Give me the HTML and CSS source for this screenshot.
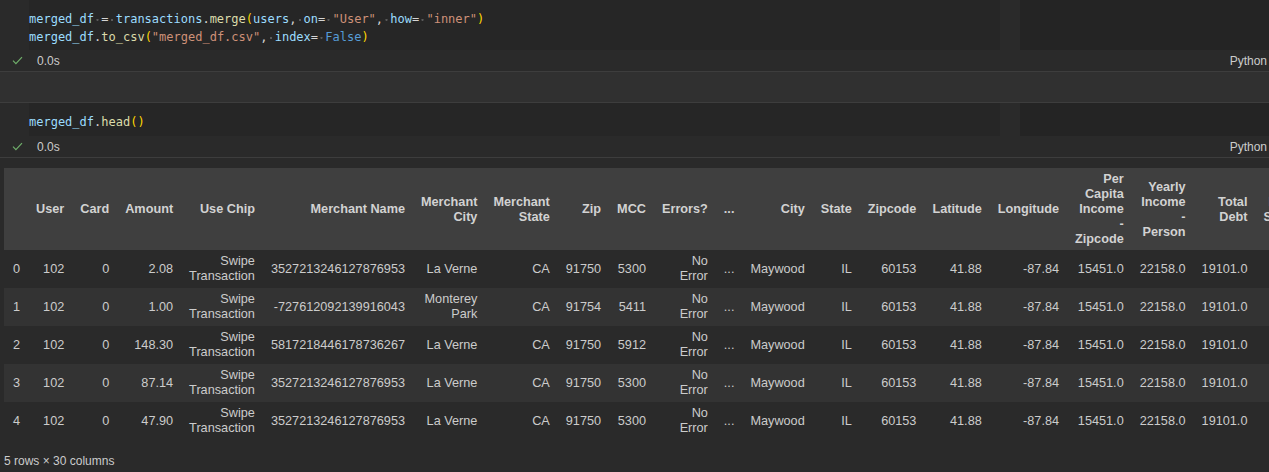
FILE: index.html
```html
<!DOCTYPE html>
<html>
<head>
<meta charset="utf-8">
<link rel="stylesheet" href="styles.css">
</head>
<body>
<div class="nb">
  <div class="cell">
    <div class="editor">
      <div class="gutter"></div>
      <div class="code">
        <div class="line"><span class="v">merged_df</span><span class="ws"> </span><span class="op">=</span><span class="ws"> </span><span class="v">transactions</span><span class="op">.</span><span class="f">merge</span><span class="p">(</span><span class="v">users</span><span class="op">,</span><span class="ws"> </span><span class="v">on</span><span class="op">=</span><span class="ws"> </span><span class="s">"User"</span><span class="op">,</span><span class="ws"> </span><span class="v">how</span><span class="op">=</span><span class="ws"> </span><span class="s">"inner"</span><span class="p">)</span></div>
        <div class="line"><span class="v">merged_df</span><span class="op">.</span><span class="f">to_csv</span><span class="p">(</span><span class="s">"merged_df.csv"</span><span class="op">,</span><span class="ws"> </span><span class="v">index</span><span class="op">=</span><span class="ws"> </span><span class="k">False</span><span class="p">)</span></div>
      </div>
      <div class="minimap"></div>
    </div>
    <div class="status">
      <svg class="check" width="11" height="9" viewBox="0 0 11 9"><path d="M1 4.6 L3.9 7.6 L10 1.2" fill="none" stroke="#6fae6a" stroke-width="1.2"/></svg>
      <span class="time">0.0s</span>
      <span class="lang">Python</span>
    </div>
  </div>
  <div class="between"></div>
  <div class="cell">
    <div class="editor single">
      <div class="gutter"></div>
      <div class="code">
        <div class="line"><span class="v">merged_df</span><span class="op">.</span><span class="f">head</span><span class="p">()</span></div>
      </div>
      <div class="minimap"></div>
    </div>
    <div class="status">
      <svg class="check" width="11" height="9" viewBox="0 0 11 9"><path d="M1 4.6 L3.9 7.6 L10 1.2" fill="none" stroke="#6fae6a" stroke-width="1.2"/></svg>
      <span class="time">0.0s</span>
      <span class="lang">Python</span>
    </div>
  </div>
  <div class="output">
    <div class="tablewrap">
      <table class="df">
        <thead>
          <tr>
            <th></th><th>User</th><th>Card</th><th>Amount</th><th>Use Chip</th><th>Merchant Name</th><th>Merchant City</th><th>Merchant State</th><th>Zip</th><th>MCC</th><th>Errors?</th><th>...</th><th>City</th><th>State</th><th>Zipcode</th><th>Latitude</th><th>Longitude</th><th>Per Capita Income - Zipcode</th><th>Yearly Income - Person</th><th>Total Debt</th><th>FICO Score</th><th>Num Credit Cards</th>
          </tr>
        </thead>
        <tbody>
          <tr><th>0</th><td>102</td><td>0</td><td>2.08</td><td>Swipe Transaction</td><td>3527213246127876953</td><td>La Verne</td><td>CA</td><td>91750</td><td>5300</td><td>No Error</td><td>...</td><td>Maywood</td><td>IL</td><td>60153</td><td>41.88</td><td>-87.84</td><td>15451.0</td><td>22158.0</td><td>19101.0</td><td>787</td><td>3</td></tr>
          <tr><th>1</th><td>102</td><td>0</td><td>1.00</td><td>Swipe Transaction</td><td>-727612092139916043</td><td>Monterey Park</td><td>CA</td><td>91754</td><td>5411</td><td>No Error</td><td>...</td><td>Maywood</td><td>IL</td><td>60153</td><td>41.88</td><td>-87.84</td><td>15451.0</td><td>22158.0</td><td>19101.0</td><td>787</td><td>3</td></tr>
          <tr><th>2</th><td>102</td><td>0</td><td>148.30</td><td>Swipe Transaction</td><td>5817218446178736267</td><td>La Verne</td><td>CA</td><td>91750</td><td>5912</td><td>No Error</td><td>...</td><td>Maywood</td><td>IL</td><td>60153</td><td>41.88</td><td>-87.84</td><td>15451.0</td><td>22158.0</td><td>19101.0</td><td>787</td><td>3</td></tr>
          <tr><th>3</th><td>102</td><td>0</td><td>87.14</td><td>Swipe Transaction</td><td>3527213246127876953</td><td>La Verne</td><td>CA</td><td>91750</td><td>5300</td><td>No Error</td><td>...</td><td>Maywood</td><td>IL</td><td>60153</td><td>41.88</td><td>-87.84</td><td>15451.0</td><td>22158.0</td><td>19101.0</td><td>787</td><td>3</td></tr>
          <tr><th>4</th><td>102</td><td>0</td><td>47.90</td><td>Swipe Transaction</td><td>3527213246127876953</td><td>La Verne</td><td>CA</td><td>91750</td><td>5300</td><td>No Error</td><td>...</td><td>Maywood</td><td>IL</td><td>60153</td><td>41.88</td><td>-87.84</td><td>15451.0</td><td>22158.0</td><td>19101.0</td><td>787</td><td>3</td></tr>
        </tbody>
      </table>
    </div>
    <p class="shape">5 rows × 30 columns</p>
  </div>
</div>
</body>
</html>
```

FILE: styles.css
```css
html, body {
  margin: 0;
  padding: 0;
  background: #2a2a2a;
  overflow: hidden;
}
.nb {
  width: 1269px;
  height: 472px;
  overflow: hidden;
  font-family: "Liberation Sans", Arial, sans-serif;
  color: #cccccc;
}
.cell {
  border-bottom: 1px solid #3d3d3d;
}
.editor {
  display: flex;
  height: 50px;
}
.editor.single {
  height: 33px;
}
.gutter {
  width: 29px;
  flex: none;
}
.code {
  flex: 1;
  background: #262626;
  padding-top: 10px;
  font-family: "DejaVu Sans Mono", "Liberation Mono", monospace;
  font-size: 12px;
  line-height: 18px;
  color: #d4d4d4;
}
.line {
  white-space: pre;
  height: 18px;
}
.minimap {
  width: 249px;
  flex: none;
  background: #242424;
  margin-left: 20px;
}
.v { color: #9cdcfe; }
.f { color: #dcdcaa; }
.s { color: #ce9178; }
.k { color: #569cd6; }
.p { color: #ffd700; }
.op { color: #d4d4d4; }
.ws {
  display: inline-block;
  width: 1ch;
  background: radial-gradient(circle at 50% 55%, #5a5a5a 0.9px, transparent 1.3px);
}
.status {
  display: flex;
  align-items: center;
  height: 21px;
  font-size: 12px;
}
.check {
  margin-left: 12px;
  width: 11px;
}
.time {
  margin-left: 14px;
  color: #cccccc;
}
.lang {
  margin-left: auto;
  margin-right: 2px;
  color: #cccccc;
}
.between {
  height: 30px;
  background: #303030;
  border-bottom: 1px solid #3d3d3d;
}
.output {
  padding: 10px 0 0 4px;
}
.tablewrap {
  overflow: hidden;
  width: 1265px;
}
.df {
  border-collapse: collapse;
  font-size: 12.7px;
  line-height: 15px;
}
.df thead th {
  background: #3f3f3f;
  font-weight: bold;
  text-align: right;
  vertical-align: middle;
  padding: 4px 8px 3px 8px;
  color: #d2d2d2;
}
.df td {
  text-align: right;
  vertical-align: middle;
  padding: 4px 8px;
  height: 30px;
  white-space: normal;
}
.df tbody th {
  font-weight: normal;
  text-align: left;
  padding: 4px 8px 4px 9px;
  vertical-align: middle;
}
.df tbody tr:nth-child(even) {
  background: #333333;
}
.shape {
  margin: 13px 0 0 0;
  font-size: 12px;
  line-height: 16px;
}
```
